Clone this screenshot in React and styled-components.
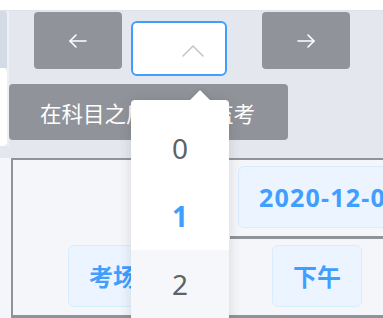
import React from 'react'
import styled, { createGlobalStyle } from 'styled-components'

const Global = createGlobalStyle`
  html, body {
    margin: 0;
    padding: 0;
    background: #ffffff;
    overflow: hidden;
  }
  body {
    font-family: "Noto Sans", "Noto Sans CJK SC", sans-serif;
  }
`

const Page = styled.div`
  width: 383px;
  height: 318px;
  display: flex;
  flex-direction: column;
  overflow: hidden;
`

const TopGap = styled.div`
  height: 10px;
  flex: none;
  background: #ffffff;
  border-bottom: 1px solid #dfe2e8;
`

const Header = styled.div`
  display: flex;
  background: #e4e7ed;
  padding-bottom: 12px;
  flex: none;
`

const Peek = styled.div`
  width: 7px;
  flex: none;
  display: flex;
  flex-direction: column;
  border-right: 2px solid #eef0f4;
`

const PeekTop = styled.div`
  height: 57px;
  background: #d3dce6;
  border-top-right-radius: 4px;
`

const PeekCard = styled.div`
  height: 78px;
  background: #ffffff;
  border-radius: 0 4px 4px 0;
`

const Controls = styled.div`
  display: flex;
  flex-direction: column;
`

const Toolbar = styled.div`
  display: flex;
  align-items: flex-start;
  padding-left: 25px;
`

const NavButton = styled.div`
  width: 88px;
  height: 57px;
  margin-top: 1px;
  margin-right: ${p => p.$gap || 0}px;
  background: #909399;
  border-radius: 4px;
  display: flex;
  align-items: center;
  justify-content: center;
  flex: none;
`

const SelectWrap = styled.div`
  position: relative;
  margin-top: 10px;
  margin-right: 35px;
  z-index: 5;
`

const SelectBox = styled.div`
  width: 71px;
  height: 51px;
  border: 2px solid #409eff;
  border-radius: 6px;
  background: #ffffff;
  display: flex;
  align-items: center;
  justify-content: flex-end;
  padding-right: 21px;
`

const Dropdown = styled.div`
  position: absolute;
  left: 0;
  top: 79px;
  width: 98px;
  height: 240px;
  background: #ffffff;
  border-radius: 4px;
  box-shadow: 0 2px 14px rgba(0, 0, 0, 0.13);
  padding-top: 14px;
  box-sizing: border-box;

  &::before {
    content: '';
    position: absolute;
    left: 62px;
    top: -7px;
    width: 14px;
    height: 14px;
    background: #ffffff;
    transform: rotate(45deg);
    box-shadow: -2px -2px 4px rgba(0, 0, 0, 0.05);
  }
`

const Option = styled.div`
  position: relative;
  height: 68px;
  display: flex;
  align-items: center;
  justify-content: center;
  font-size: 28px;
  font-weight: ${p => (p.$selected ? 700 : 400)};
  color: ${p => (p.$selected ? '#409eff' : '#606266')};
  background: ${p => (p.$hover ? '#f5f7fa' : 'transparent')};
`

const Banner = styled.div`
  margin-top: 8px;
  width: 279px;
  height: 56px;
  background: #909399;
  border-radius: 4px;
  color: #ffffff;
  font-size: 21.5px;
  display: flex;
  align-items: center;
  padding-left: 31px;
  box-sizing: border-box;
  white-space: nowrap;
`

const Board = styled.div`
  flex: 1;
  background: #f5f6f9;
  padding-left: 11px;
`

const Table = styled.div`
  display: grid;
  grid-template-columns: 217px 190px;
  grid-template-rows: 79px 79px;
  border-left: 2px solid #909399;
  border-top: 2px solid #909399;
  background: #f5f6f9;
`

const Cell = styled.div`
  display: flex;
  align-items: center;
  padding-left: ${p => p.$pad}px;
  padding-bottom: 3px;
  border-bottom: ${p => (p.$line ? '3px solid #909399' : '3px solid transparent')};
  box-sizing: border-box;
`

const Pill = styled.div`
  height: 62px;
  padding: 0 20px;
  border: 1px solid #d9ecff;
  background: #ecf5ff;
  border-radius: 6px;
  color: #409eff;
  font-size: ${p => (p.$wide ? 25 : 24)}px;
  letter-spacing: ${p => (p.$wide ? 1.2 : 0)}px;
  font-weight: 700;
  display: flex;
  align-items: center;
  white-space: nowrap;
  box-sizing: border-box;
`

const Arrow = ({ dir }) => (
  <svg width="20" height="16" viewBox="0 0 20 16" fill="none" stroke="#ffffff" strokeWidth="1.6" strokeLinecap="round" strokeLinejoin="round">
    <line x1="2" y1="8" x2="18" y2="8" />
    {dir === 'left' ? <polyline points="8,2 2,8 8,14" /> : <polyline points="12,2 18,8 12,14" />}
  </svg>
)

const Chevron = () => (
  <svg width="22" height="12" viewBox="0 0 22 12" fill="none" stroke="#c0c4cc" strokeWidth="1.5" strokeLinecap="round" strokeLinejoin="round" style={{ marginTop: 4 }}>
    <polyline points="1,11 11,1 21,11" />
  </svg>
)

export default function App() {
  return (
    <>
      <Global />
      <Page>
        <TopGap />
        <Header>
          <Peek>
            <PeekTop />
            <PeekCard />
          </Peek>
          <Controls>
            <Toolbar>
              <NavButton $gap={9}>
                <Arrow dir="left" />
              </NavButton>
              <SelectWrap>
                <SelectBox>
                  <Chevron />
                </SelectBox>
                <Dropdown>
                  <Option>0</Option>
                  <Option $selected>1</Option>
                  <Option $hover>2</Option>
                </Dropdown>
              </SelectWrap>
              <NavButton>
                <Arrow dir="right" />
              </NavButton>
            </Toolbar>
            <Banner>在科目之后插入新监考</Banner>
          </Controls>
        </Header>
        <Board>
          <Table>
            <Cell $pad={55} />
            <Cell $pad={8} $line>
              <Pill $wide>2020-12-07</Pill>
            </Cell>
            <Cell $pad={55} $line>
              <Pill>考场安排</Pill>
            </Cell>
            <Cell $pad={42} $line>
              <Pill>下午</Pill>
            </Cell>
          </Table>
        </Board>
      </Page>
    </>
  )
}
